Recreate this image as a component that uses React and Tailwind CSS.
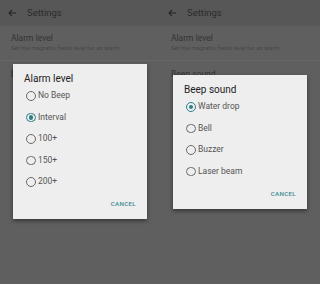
import React from 'react';

const alarmLevels = ['No Beep', 'Interval', '100+', '150+', '200+'];
const beepSounds = ['Water drop', 'Bell', 'Buzzer', 'Laser beam'];

const Radio = ({ checked }) => (
  <span
    className={`flex items-center justify-center w-[9.5px] h-[9.5px] rounded-full border ${
      checked ? 'border-[#2f7f8a]' : 'border-[#6a6a6a]'
    }`}
  >
    {checked && <span className="w-[4.5px] h-[4.5px] rounded-full bg-[#2f7f8a]" />}
  </span>
);

const ChoiceDialog = ({ title, options, selected, top }) => (
  <div
    className="absolute left-[13px] w-[134px] bg-[#eeeeee] shadow-[0_2px_4px_rgba(0,0,0,0.45)] flex flex-col"
    style={{ top }}
  >
    <div className="pt-[9px] pl-[11px] text-[10px] leading-[12px] text-[#222]">{title}</div>
    <div className="flex flex-col">
      {options.map((opt) => (
        <div key={opt} className="h-[21.5px] flex items-center pl-[13px] gap-[2.5px]">
          <Radio checked={opt === selected} />
          <span className="text-[8.5px] text-[#555]">{opt}</span>
        </div>
      ))}
    </div>
    <div className="h-[25px] flex items-center justify-end pr-[11px]">
      <span className="text-[6.2px] font-medium tracking-[0.3px] text-[#3b8793]">CANCEL</span>
    </div>
    <div className="h-[1.5px]" />
  </div>
);

const Pane = ({ children }) => (
  <div className="relative w-[160px] h-full bg-[#5f5f5f] flex flex-col">
    {/* Toolbar */}
    <div className="h-[26px] bg-[#575757] flex items-center">
      <svg className="ml-[8px]" width="8" height="8" viewBox="0 0 8 8" fill="none" stroke="#262626" strokeWidth="1.1">
        <path d="M8 4H1M4 1L1 4l3 3" />
      </svg>
      <span className="ml-[11px] text-[9.5px] text-[#2c2c2c]">Settings</span>
    </div>
    {/* Settings list */}
    <div className="px-[11px] pt-[7px]">
      <div className="text-[8.5px] leading-[10px] text-[#333]">Alarm level</div>
      <div className="text-[6px] leading-[9px] text-[#474747] whitespace-nowrap">
        Set the magnetic fields level for an alarm.
      </div>
    </div>
    <div className="mt-[8px] h-px bg-[#666]" />
    <div className="px-[11px] pt-[8px] text-[8.5px] leading-[10px] text-[#333]">Beep sound</div>
    {children}
  </div>
);

export default function App() {
  return (
    <div
      className="w-[320px] h-[284px] flex bg-[#5f5f5f] overflow-hidden"
      style={{ fontFamily: 'Roboto, "Liberation Sans", sans-serif' }}
    >
      <Pane>
        <ChoiceDialog title="Alarm level" options={alarmLevels} selected="Interval" top={64} />
      </Pane>
      <div className="w-px h-full bg-[#4a4a4a] -ml-px" />
      <Pane>
        <ChoiceDialog title="Beep sound" options={beepSounds} selected="Water drop" top={75} />
      </Pane>
    </div>
  );
}
